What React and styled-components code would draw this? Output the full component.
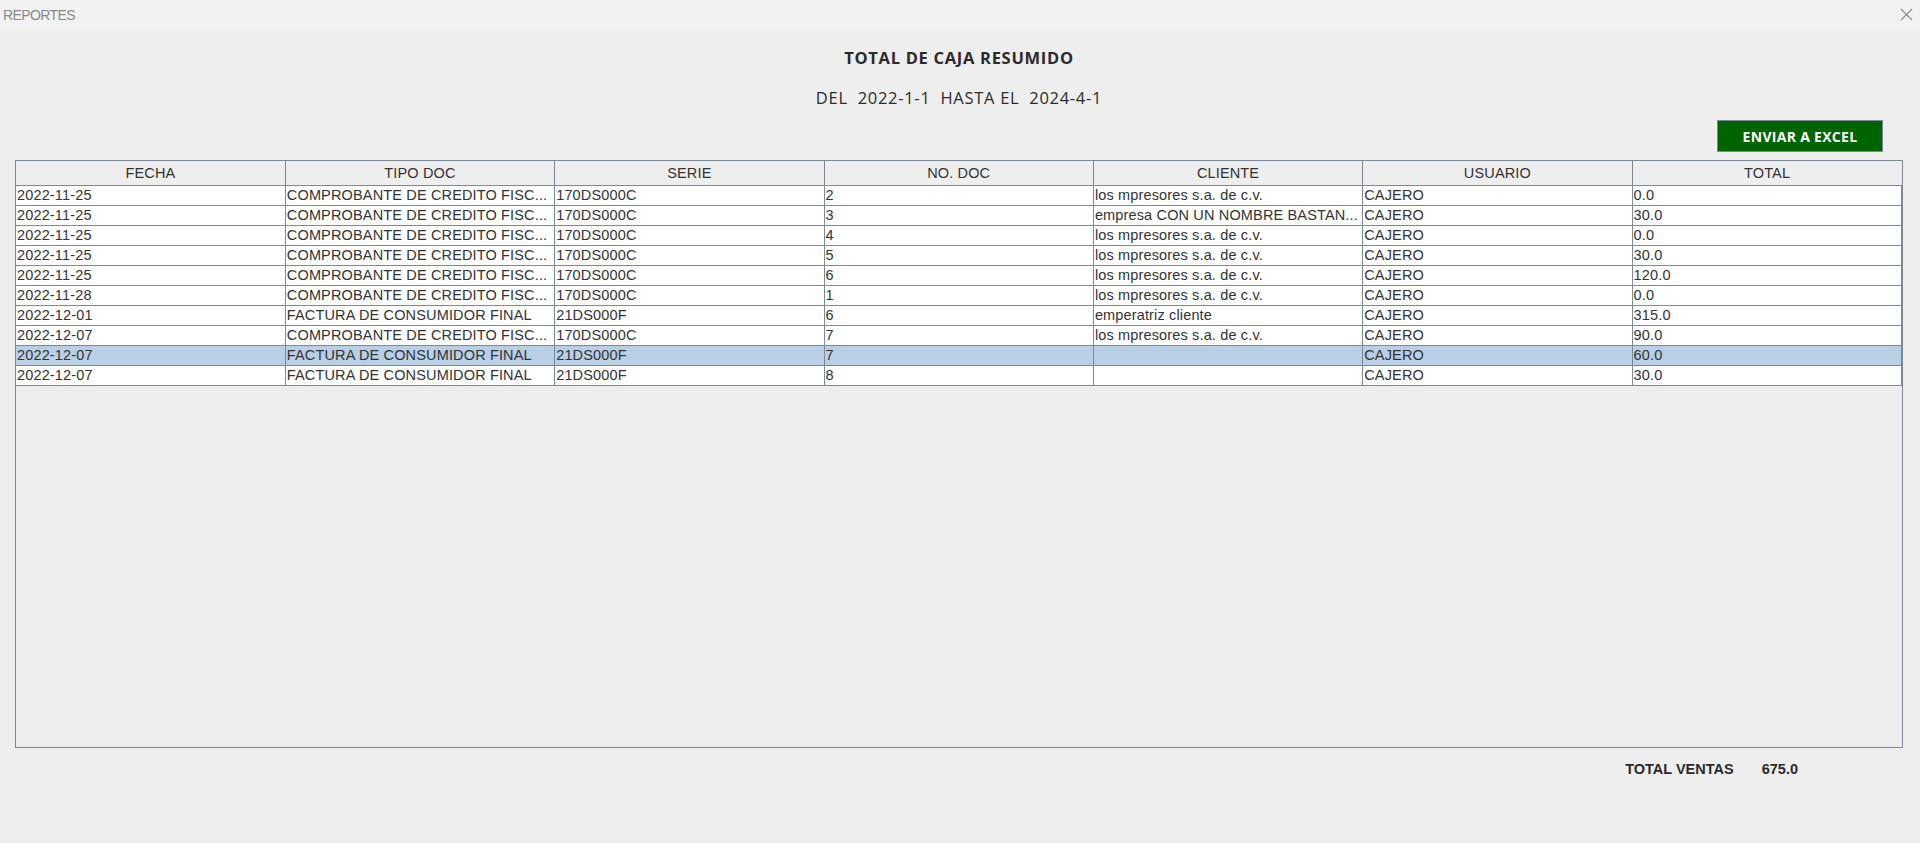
import styled, { createGlobalStyle } from "styled-components";

const GlobalStyle = createGlobalStyle`
  html, body {
    margin: 0;
    padding: 0;
    background: #eeeeee;
  }
  body {
    font-family: "Liberation Sans", Arial, sans-serif;
    color: #333333;
  }
`;

const Window = styled.div`
  width: 1920px;
  height: 843px;
  display: flex;
  flex-direction: column;
  background: #eeeeee;
  overflow: hidden;
`;

const TitleBar = styled.div`
  height: 29px;
  background: #f2f2f2;
  display: flex;
  align-items: center;
  justify-content: space-between;
  padding: 0 7px 0 3px;
`;

const WindowTitle = styled.span`
  font-family: "Liberation Sans", Arial, sans-serif;
  font-size: 14px;
  color: #8a8a8a;
  letter-spacing: -0.6px;
`;

const CloseButton = styled.button`
  border: none;
  background: none;
  padding: 0;
  width: 14px;
  height: 14px;
  display: flex;
  align-items: center;
  justify-content: center;
  cursor: pointer;
`;

const Content = styled.div`
  flex: 1;
  display: flex;
  flex-direction: column;
  padding: 0 17px 0 15px;
`;

const Heading = styled.h1`
  margin: 18px 0 0;
  text-align: center;
  font-family: "Open Sans", "Noto Sans", sans-serif;
  font-size: 16.5px;
  font-weight: 700;
  letter-spacing: 0.7px;
  line-height: 22px;
  color: #2b2b2b;
`;

const Range = styled.div`
  margin-top: 18px;
  text-align: center;
  white-space: pre;
  font-family: "Open Sans", "Noto Sans", sans-serif;
  font-size: 16.5px;
  letter-spacing: 0.7px;
  line-height: 22px;
  color: #2b2b2b;
`;

const Actions = styled.div`
  display: flex;
  justify-content: flex-end;
  margin-top: 11px;
  padding-right: 20px;
`;

const ExcelButton = styled.button`
  width: 166px;
  height: 32px;
  background: #006400;
  border: 1px solid #7a8a99;
  color: #ffffff;
  font-family: "Open Sans", "Noto Sans", sans-serif;
  font-weight: 700;
  font-size: 14px;
  letter-spacing: 0.3px;
  cursor: pointer;
`;

const ScrollPane = styled.div`
  margin-top: 8px;
  height: 586px;
  border: 1px solid #7a8a99;
  background: #eeeeee;
  overflow: hidden;
`;

const Table = styled.table`
  width: 100%;
  border-collapse: collapse;
  table-layout: fixed;
  font-size: 14.5px;
  letter-spacing: 0.15px;
`;

const HeadCell = styled.th`
  height: 24px;
  padding: 0;
  font-weight: 400;
  text-align: center;
  background: #eeeeee;
  color: #333333;
  border-right: 1px solid #7a8a99;
  border-bottom: 1px solid #7a8a99;
  &:last-child {
    border-right: none;
  }
`;

const Row = styled.tr`
  background: ${(p) => (p.$selected ? "#b8cfe5" : "#ffffff")};
`;

const Cell = styled.td`
  height: 19px;
  padding: 0 0 0 1px;
  white-space: nowrap;
  overflow: hidden;
  color: #333333;
  border-right: 1px solid #7a8a99;
  border-bottom: 1px solid #7a8a99;
  line-height: 19px;
`;

const Totals = styled.div`
  display: flex;
  justify-content: flex-end;
  gap: 28px;
  margin-top: 13px;
  padding-right: 105px;
  font-family: "Liberation Sans", Arial, sans-serif;
  font-size: 14.5px;
  font-weight: 700;
  color: #2b2b2b;
`;

const columns = ["FECHA", "TIPO DOC", "SERIE", "NO. DOC", "CLIENTE", "USUARIO", "TOTAL"];

const CCF = "COMPROBANTE DE CREDITO FISC...";
const FCF = "FACTURA DE CONSUMIDOR FINAL";
const IMP = "los mpresores s.a. de c.v.";

const rows = [
  ["2022-11-25", CCF, "170DS000C", "2", IMP, "CAJERO", "0.0"],
  ["2022-11-25", CCF, "170DS000C", "3", "empresa CON UN NOMBRE BASTAN...", "CAJERO", "30.0"],
  ["2022-11-25", CCF, "170DS000C", "4", IMP, "CAJERO", "0.0"],
  ["2022-11-25", CCF, "170DS000C", "5", IMP, "CAJERO", "30.0"],
  ["2022-11-25", CCF, "170DS000C", "6", IMP, "CAJERO", "120.0"],
  ["2022-11-28", CCF, "170DS000C", "1", IMP, "CAJERO", "0.0"],
  ["2022-12-01", FCF, "21DS000F", "6", "emperatriz cliente", "CAJERO", "315.0"],
  ["2022-12-07", CCF, "170DS000C", "7", IMP, "CAJERO", "90.0"],
  ["2022-12-07", FCF, "21DS000F", "7", "", "CAJERO", "60.0"],
  ["2022-12-07", FCF, "21DS000F", "8", "", "CAJERO", "30.0"],
];

const CloseIcon = () => (
  <svg width="13" height="13" viewBox="0 0 13 13">
    <path d="M1 1 L12 12 M12 1 L1 12" stroke="#8a8a8a" strokeWidth="1.1" fill="none" />
  </svg>
);

const App = () => {
  return (
    <>
      <GlobalStyle />
      <Window>
        <TitleBar>
          <WindowTitle>REPORTES</WindowTitle>
          <CloseButton aria-label="Cerrar">
            <CloseIcon />
          </CloseButton>
        </TitleBar>
        <Content>
          <Heading>TOTAL DE CAJA RESUMIDO</Heading>
          <Range>{"DEL  2022-1-1  HASTA EL  2024-4-1"}</Range>
          <Actions>
            <ExcelButton>ENVIAR A EXCEL</ExcelButton>
          </Actions>
          <ScrollPane>
            <Table>
              <thead>
                <tr>
                  {columns.map((c) => (
                    <HeadCell key={c}>{c}</HeadCell>
                  ))}
                </tr>
              </thead>
              <tbody>
                {rows.map((r, i) => (
                  <Row key={i} $selected={i === 8}>
                    {r.map((v, j) => (
                      <Cell key={j}>{v}</Cell>
                    ))}
                  </Row>
                ))}
              </tbody>
            </Table>
          </ScrollPane>
          <Totals>
            <span>TOTAL VENTAS</span>
            <span>675.0</span>
          </Totals>
        </Content>
      </Window>
    </>
  );
};

export default App;
